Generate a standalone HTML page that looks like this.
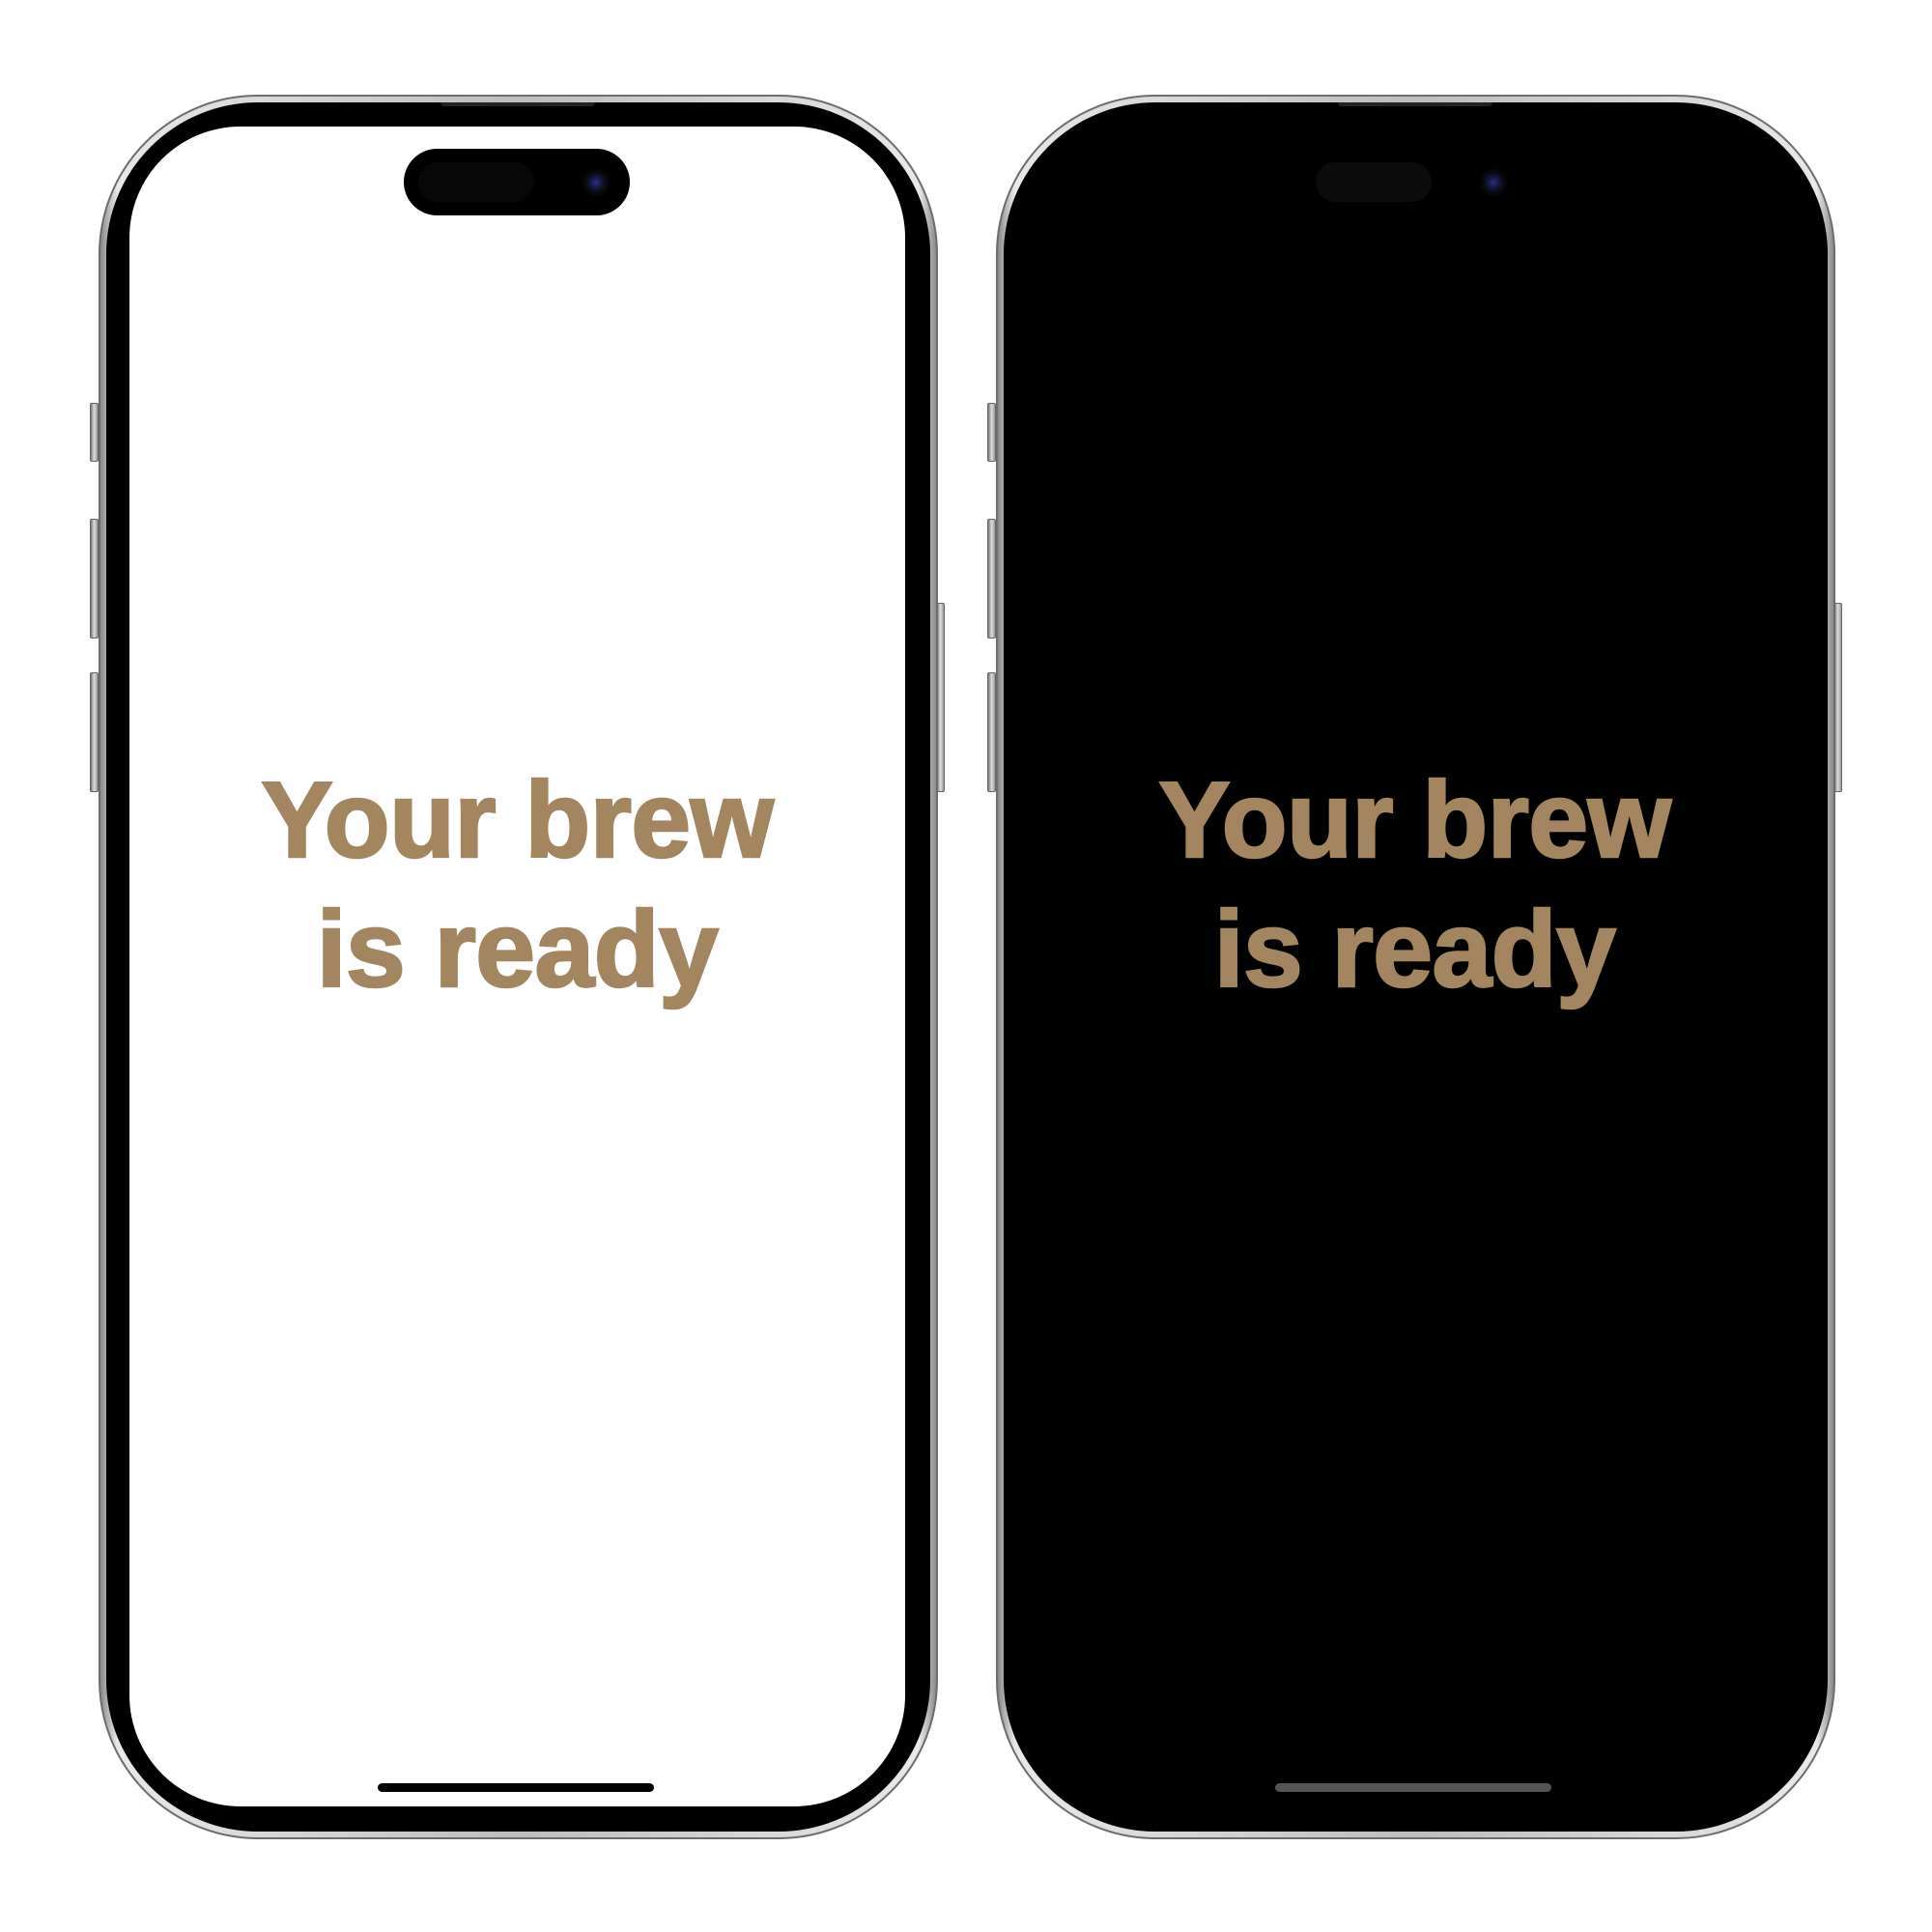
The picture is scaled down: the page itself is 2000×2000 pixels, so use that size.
<!DOCTYPE html>
<html><head><style>
*{margin:0;padding:0;box-sizing:border-box}
body{width:2000px;height:2000px;background:#fff;position:relative;overflow:hidden;font-family:"Liberation Sans",sans-serif}
.ph{position:absolute;top:98px;width:869px;height:1806px}
.frame{position:absolute;inset:0;border-radius:165px;background:linear-gradient(90deg,#8a8a8a,#e8e8e8 2%,#bdbdbd 50%,#e8e8e8 98%,#8a8a8a);border:2px solid #6d6d6d}
.bez{position:absolute;left:8px;top:8px;right:8px;bottom:8px;border-radius:157px;background:#000}
.scr{position:absolute;left:32px;top:33px;right:34px;bottom:34px;border-radius:115px;overflow:hidden}
.isl{position:absolute;left:284px;top:23px;width:234px;height:69px;border-radius:35px;background:#000}
.pill{position:absolute;left:15px;top:14px;width:120px;height:41px;border-radius:21px;background:#070707}
.cam{position:absolute;left:185px;top:21px;width:28px;height:28px;border-radius:50%;background:radial-gradient(circle,#2c3080 0,#161a45 25%,#08080f 55%,#040405 80%)}
.txt{position:absolute;left:0;right:0;top:651px;text-align:center;color:#a3855f;font-weight:bold;font-size:111px;line-height:134px;letter-spacing:-0.5px;-webkit-text-stroke:2.5px #a3855f}
.hi{position:absolute;left:257px;width:286px;height:9px;border-radius:5px;bottom:15px}
.btn{position:absolute;width:9px;background:linear-gradient(90deg,#777,#ddd,#999);border:1px solid #666;border-radius:2px}
.spk{position:absolute;left:354px;top:8px;width:160px;height:4px;border-radius:0 0 4px 4px;background:#222}
</style></head><body>

<div class="ph" style="left:102px">
 <div class="btn" style="left:-9px;top:319px;height:61px"></div>
 <div class="btn" style="left:-9px;top:439px;height:124px"></div>
 <div class="btn" style="left:-9px;top:598px;height:124px"></div>
 <div class="btn" style="left:867px;top:526px;height:196px"></div>
 <div class="frame"></div>
 <div class="bez"></div>
 <div class="spk"></div>
 <div class="scr" style="background:#fff">
  <div class="isl"><div class="pill"></div><div class="cam"></div></div>
  <div class="txt">Your brew<br>is ready</div>
  <div class="hi" style="background:#000"></div>
 </div>
</div>

<div class="ph" style="left:1031px">
 <div class="btn" style="left:-9px;top:319px;height:61px"></div>
 <div class="btn" style="left:-9px;top:439px;height:124px"></div>
 <div class="btn" style="left:-9px;top:598px;height:124px"></div>
 <div class="btn" style="left:867px;top:526px;height:196px"></div>
 <div class="frame"></div>
 <div class="bez"></div>
 <div class="spk"></div>
 <div class="scr" style="background:#000">
  <div class="isl"><div class="pill" style="background:#0b0b0b"></div><div class="cam"></div></div>
  <div class="txt">Your brew<br>is ready</div>
  <div class="hi" style="background:#555"></div>
 </div>
</div>
</body></html>
